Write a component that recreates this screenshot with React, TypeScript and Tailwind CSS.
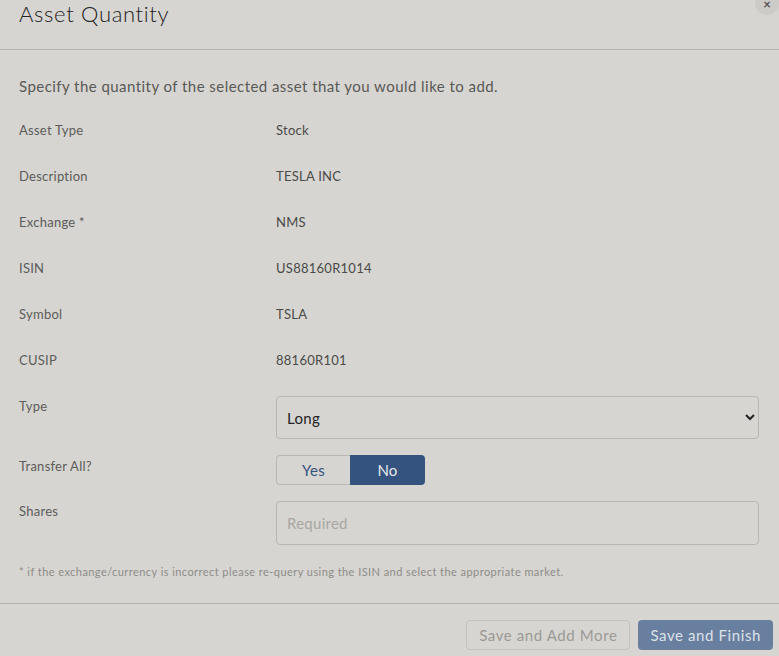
import { FC } from "react";

const details = [
  { label: "Asset Type", value: "Stock" },
  { label: "Description", value: "TESLA INC" },
  { label: "Exchange *", value: "NMS" },
  { label: "ISIN", value: "US88160R1014" },
  { label: "Symbol", value: "TSLA" },
  { label: "CUSIP", value: "88160R101" },
];

const App: FC = () => {
  return (
    <div className="relative w-[779px] h-[656px] overflow-hidden bg-[#d6d5d1] font-['Lato',sans-serif]">
      {/* close button, partly scrolled off the top */}
      <span className="absolute -top-[9px] right-0 w-6 h-6 rounded-full bg-[#cccbc7]" />
      <button className="absolute top-0 right-[6px] w-3 h-[14px] flex items-start justify-center text-[#555] text-[13px] font-bold leading-[9px]">
        ×
      </button>

      <header className="h-[50px] border-b border-[#b3b2ae] px-[19px]">
        <h1 className="text-[22px] leading-[28px] font-light tracking-[0.03em] text-[#222]">Asset Quantity</h1>
      </header>

      <div className="px-[19px] pt-[26px]">
        <p className="text-[15px] leading-[20px] tracking-[0.03em] text-[#595957] mb-[24px]">
          Specify the quantity of the selected asset that you would like to add.
        </p>

        {details.map((row) => (
          <div key={row.label} className="grid grid-cols-[257px_1fr] min-h-[30px] mb-[16px] text-[13px] leading-[20px] tracking-[0.02em]">
            <div className="text-[#5c5c5a]">{row.label}</div>
            <div className="text-[#4a4a48]">{row.value}</div>
          </div>
        ))}

        <div className="grid grid-cols-[257px_1fr] mb-[16px] text-[13px] leading-[20px] tracking-[0.02em]">
          <div className="text-[#5c5c5a]">Type</div>
          <select className="h-[43px] w-[483px] border border-[#b8b7b3] rounded-[4px] bg-transparent px-[6px] text-[15px] tracking-[0.02em] text-[#222]">
            <option>Long</option>
            <option>Short</option>
          </select>
        </div>

        <div className="grid grid-cols-[257px_1fr] mb-[16px] text-[13px] leading-[20px] tracking-[0.02em]">
          <div className="text-[#5c5c5a] pt-[1px]">Transfer All?</div>
          <div className="flex h-[30px] text-[15px]">
            <button className="w-[74px] border border-r-0 border-[#b8b7b3] rounded-l-[4px] text-[#34527f]">Yes</button>
            <button className="w-[75px] rounded-r-[4px] bg-[#34537f] text-[#e6e8ec]">No</button>
          </div>
        </div>

        <div className="grid grid-cols-[257px_1fr] text-[13px] leading-[20px] tracking-[0.02em]">
          <div className="text-[#5c5c5a]">Shares</div>
          <input
            placeholder="Required"
            className="h-[44px] w-[483px] border border-[#b8b7b3] rounded-[4px] bg-transparent px-[10px] text-[15px] placeholder:text-[#a9a8a4] outline-none"
          />
        </div>

        <p className="mt-[19px] text-[11px] leading-[16px] tracking-[0.04em] text-[#8d8c88]">
          * if the exchange/currency is incorrect please re-query using the ISIN and select the appropriate market.
        </p>
      </div>

      <footer className="mt-[23px] border-t border-[#b3b2ae] pt-[16px] pr-[6px] flex justify-end gap-[8px] text-[15px] tracking-[0.04em]">
        <button className="h-[30px] px-[12px] border border-[#c3c2be] rounded-[4px] text-[#9b9a96]">Save and Add More</button>
        <button className="h-[30px] px-[12px] rounded-[4px] bg-[#687fa0] text-[#dde1e8]">Save and Finish</button>
      </footer>
    </div>
  );
};

export default App;
